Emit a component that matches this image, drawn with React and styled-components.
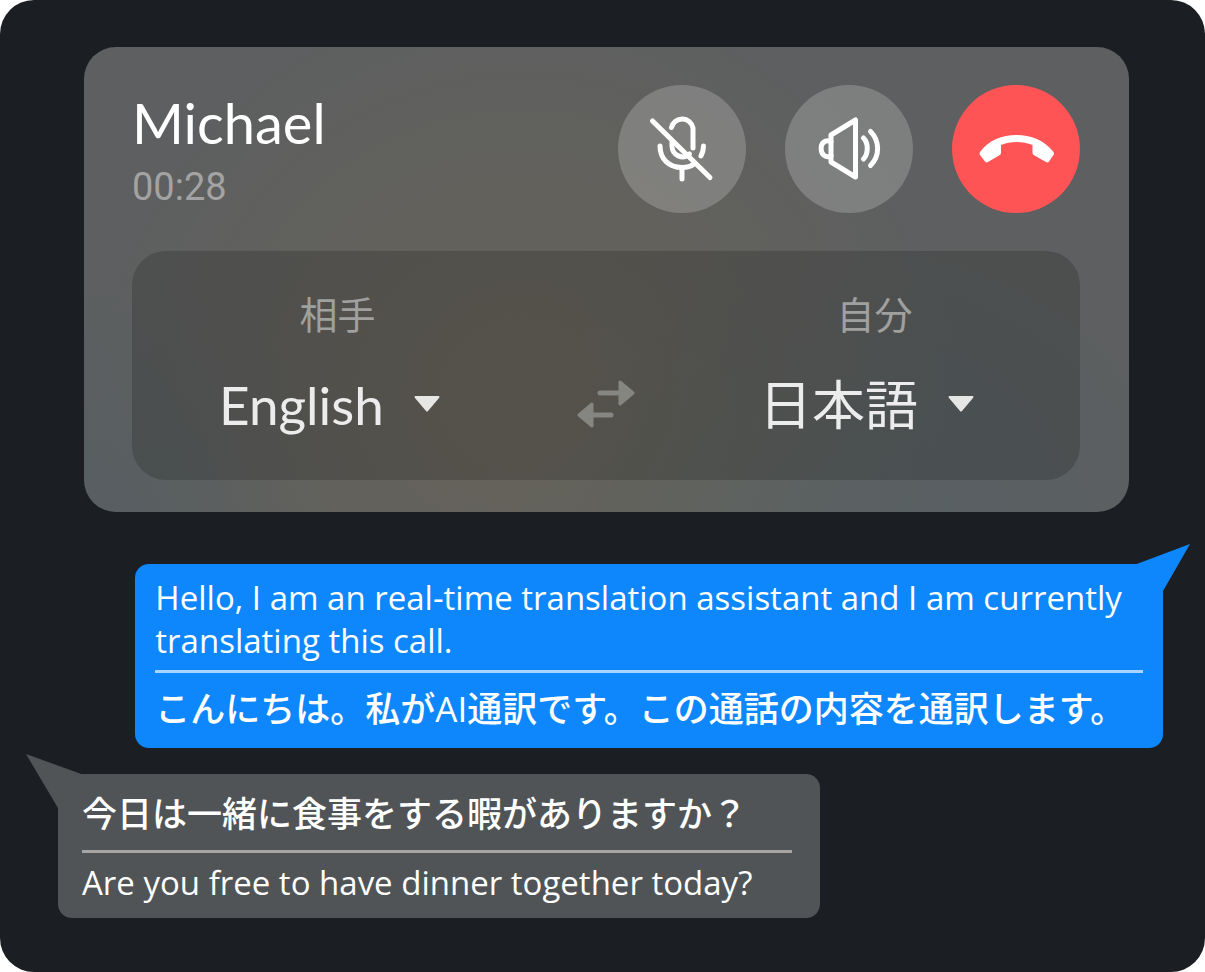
/* eslint-disable react/prop-types */
import { Fragment, useState } from 'react';
import styled, { createGlobalStyle } from 'styled-components';

const languages = ['English', '日本語'];

const messages = [
  {
    id: 1,
    mine: true,
    lines: [
      { lang: 'en', text: 'Hello, I am an real-time translation assistant and I am currently translating this call.' },
      { lang: 'ja', text: 'こんにちは。私がAI通訳です。この通話の内容を通訳します。' }
    ]
  },
  {
    id: 2,
    mine: false,
    lines: [
      { lang: 'ja', text: '今日は一緒に食事をする暇がありますか？' },
      { lang: 'en', text: 'Are you free to have dinner together today?' }
    ]
  }
];

const MicOffIcon = () => (
  <ButtonIcon viewBox="0 0 128 128" aria-hidden="true">
    <path d="M53.500 42.500A11 11 0 0 1 75 43V63" />
    <path d="M54 57V61A10.500 11 0 0 0 71.500 69" />
    <path d="M42 61C42 74 51 82.500 64 82.500C69 82.500 73 81.500 76 79" />
    <path d="M85.500 61C85.500 65 84.500 68 83 71" />
    <path d="M64 83V94" />
    <path d="M34.500 36L92 92.500" />
  </ButtonIcon>
);

const SpeakerIcon = () => (
  <ButtonIcon viewBox="0 0 128 128" aria-hidden="true">
    <path d="M46 50L70.500 35V92L46 77Z" />
    <path d="M46 57C44 55.500 42.500 55.500 41 56C34.500 58 34.500 69 41 71.500C42.500 72 44 72 46 70.500" />
    <path d="M78.500 53C83.500 58 83.500 69 78.500 74" />
    <path d="M85.500 46.500C95 56 95 71 85.500 80.500" />
  </ButtonIcon>
);

const HangUpIcon = () => (
  <ButtonIcon viewBox="0 0 128 128" aria-hidden="true">
    <path
      className="solid"
      d="M28 67C37 55 50 50 64.500 50S92 55 101.500 67Q102.500 68.500 101.500 70L97 76.500Q96 78 94 77L82.500 70.500Q80.500 69.500 80.500 68V60C71 56 58 56 49 60V68Q49 69.500 47 70.500L36 77Q34 78 33 76.500L28 70Q27 68.500 28 67Z"
    />
  </ButtonIcon>
);

const LanguagePicker = ({ id, label, value, onChange }) => (
  <Picker>
    <PickerLabel htmlFor={id}>{label}</PickerLabel>
    <PickerField>
      <Select id={id} value={value} onChange={(e) => onChange(e.target.value)}>
        {languages.map((language) => (
          <option key={language} value={language}>{language}</option>
        ))}
      </Select>
      <Caret viewBox="0 0 26 16" aria-hidden="true">
        <path d="M1 0H25Q26 1 25 2L14 15Q13 16 12 15L1 2Q0 1 1 0Z" />
      </Caret>
    </PickerField>
  </Picker>
);

const Message = ({ mine, lines }) => (
  <Bubble $mine={mine}>
    <Tail $mine={mine} viewBox="0 0 58 54" aria-hidden="true">
      <path d={mine ? 'M0 21L56 0L29 47V54H0Z' : 'M0 0L58 21V54H32Z'} />
    </Tail>
    {lines.map((line, index) => (
      <Fragment key={line.lang}>
        {index > 0 && <Divider $mine={mine} />}
        <Line lang={line.lang}>{line.text}</Line>
      </Fragment>
    ))}
  </Bubble>
);

const App = () => {
  const [theirs, setTheirs] = useState('English');
  const [ours, setOurs] = useState('日本語');
  const [muted, setMuted] = useState(true);

  const swap = () => {
    setTheirs(ours);
    setOurs(theirs);
  };

  return (
    <>
      <GlobalStyle />
      <Screen>
        <CallCard>
          <CallHeader>
            <Caller>
              <CallerName>Michael</CallerName>
              <Duration>00:28</Duration>
            </Caller>
            <Actions>
              <RoundButton aria-label="Mute" aria-pressed={muted} onClick={() => setMuted(!muted)}>
                <MicOffIcon />
              </RoundButton>
              <RoundButton aria-label="Speaker">
                <SpeakerIcon />
              </RoundButton>
              <RoundButton aria-label="Hang up" $danger>
                <HangUpIcon />
              </RoundButton>
            </Actions>
          </CallHeader>
          <LanguagePanel>
            <LanguagePicker id="theirs" label="相手" value={theirs} onChange={setTheirs} />
            <SwapButton aria-label="Swap languages" onClick={swap}>
              <svg viewBox="0 0 58 48" aria-hidden="true">
                <path d="M23 13H44M34 35H14" />
                <path className="head" d="M43 2L56 13L43 24Z" />
                <path className="head" d="M15 24L2 35L15 46Z" />
              </svg>
            </SwapButton>
            <LanguagePicker id="ours" label="自分" value={ours} onChange={setOurs} />
          </LanguagePanel>
        </CallCard>
        <Chat>
          {messages.map((message) => (
            <Message key={message.id} mine={message.mine} lines={message.lines} />
          ))}
        </Chat>
      </Screen>
    </>
  );
};

const GlobalStyle = createGlobalStyle`
  * {
    box-sizing: border-box;
  }

  body {
    margin: 0;
    background: #fff;
    font-family: "Open Sans", "Noto Sans CJK JP", sans-serif;
  }

  button {
    padding: 0;
    border: none;
    background: none;
    cursor: pointer;
  }
`;

const Screen = styled.main`
  min-height: 100vh;
  padding: 47px 42px 54px 58px;
  border-radius: 34px;
  background: #1b1f24;
  color: #fff;
`;

const CallCard = styled.section`
  margin: 0 34px 0 26px;
  padding: 38px 49px 32px 48px;
  border-radius: 32px;
  background:
    radial-gradient(ellipse 42% 90% at 42% 75%, rgba(108, 101, 85, 0.65), rgba(108, 101, 85, 0)),
    radial-gradient(ellipse 36% 60% at 70% 100%, rgba(84, 97, 102, 0.7), rgba(84, 97, 102, 0)),
    radial-gradient(ellipse 20% 50% at 5% 100%, rgba(84, 93, 98, 0.7), rgba(84, 93, 98, 0)),
    #5d5f60;
`;

const CallHeader = styled.header`
  display: flex;
  justify-content: space-between;
`;

const Caller = styled.div`
  font-family: Lato, sans-serif;
`;

const CallerName = styled.h1`
  margin: 4px 0 0;
  font-size: 56px;
  font-weight: 400;
  line-height: 68px;
`;

const Duration = styled.p`
  margin: 6px 0 0;
  color: #a3a3a3;
  font-family: Roboto, sans-serif;
  font-size: 38px;
  line-height: 48px;
`;

const Actions = styled.div`
  display: flex;
  gap: 39px;
`;

const RoundButton = styled.button`
  width: 128px;
  height: 128px;
  border-radius: 50%;
  background: ${({ $danger }) => ($danger ? '#ff5456' : 'rgba(255, 255, 255, 0.2)')};
`;

const ButtonIcon = styled.svg`
  display: block;
  width: 100%;
  fill: none;
  stroke: #fff;
  stroke-width: 5;
  stroke-linecap: round;
  stroke-linejoin: round;

  .solid {
    fill: #fff;
    stroke: none;
  }
`;

const LanguagePanel = styled.div`
  display: grid;
  grid-template-columns: 1fr 58px 1fr;
  column-gap: 34px;
  margin-top: 38px;
  padding: 35px 0 38px;
  border-radius: 34px;
  background: rgba(0, 0, 0, 0.17);
`;

const Picker = styled.div`
  display: flex;
  flex-direction: column;
  align-items: center;
  gap: 24px;
`;

const PickerLabel = styled.label`
  color: #a0a09e;
  font-size: 38px;
  line-height: 56px;
`;

const PickerField = styled.div`
  display: flex;
  align-items: center;
  gap: 30px;
  padding-right: 16px;
`;

const Select = styled.select`
  field-sizing: content;
  appearance: none;
  height: 76px;
  padding: 0;
  border: none;
  background: none;
  color: #ececec;
  font-family: Lato, "Noto Sans CJK JP", sans-serif;
  font-size: 53px;
  cursor: pointer;

  option {
    color: #222;
  }
`;

const Caret = styled.svg`
  width: 26px;
  fill: #e6e6e4;
  pointer-events: none;
`;

const SwapButton = styled.button`
  align-self: end;
  height: 76px;

  svg {
    display: block;
    width: 100%;
    fill: none;
    stroke: #858681;
    stroke-width: 5;
    stroke-linecap: round;
    stroke-linejoin: round;
  }

  .head {
    fill: #858681;
    stroke-width: 3;
  }
`;

const Chat = styled.section`
  display: flex;
  flex-direction: column;
  gap: 26px;
  margin-top: 52px;
`;

const Bubble = styled.article`
  position: relative;
  align-self: ${({ $mine }) => ($mine ? 'flex-end' : 'flex-start')};
  width: ${({ $mine }) => ($mine ? '93%' : '69%')};
  padding: ${({ $mine }) => ($mine ? '12px 20px 11px' : '12px 28px 14px 24px')};
  border-radius: 14px;
  background: ${({ $mine }) => ($mine ? '#0d87fb' : '#505456')};
`;

const Tail = styled.svg`
  position: absolute;
  top: -20px;
  ${({ $mine }) => ($mine ? 'right: -29px;' : 'left: -32px;')}
  width: 58px;
  fill: ${({ $mine }) => ($mine ? '#0d87fb' : '#505456')};
`;

const Divider = styled.hr`
  height: 3px;
  margin: 8px 0;
  border: none;
  background: ${({ $mine }) => ($mine ? '#a9d4fd' : '#a5a5a5')};
`;

const Line = styled.p`
  position: relative;
  margin: 0;
  font-size: 33px;
  font-weight: 500;
  line-height: 43px;

  &:lang(ja) {
    font-size: 35px;
    line-height: 56px;
  }
`;

export default App;
